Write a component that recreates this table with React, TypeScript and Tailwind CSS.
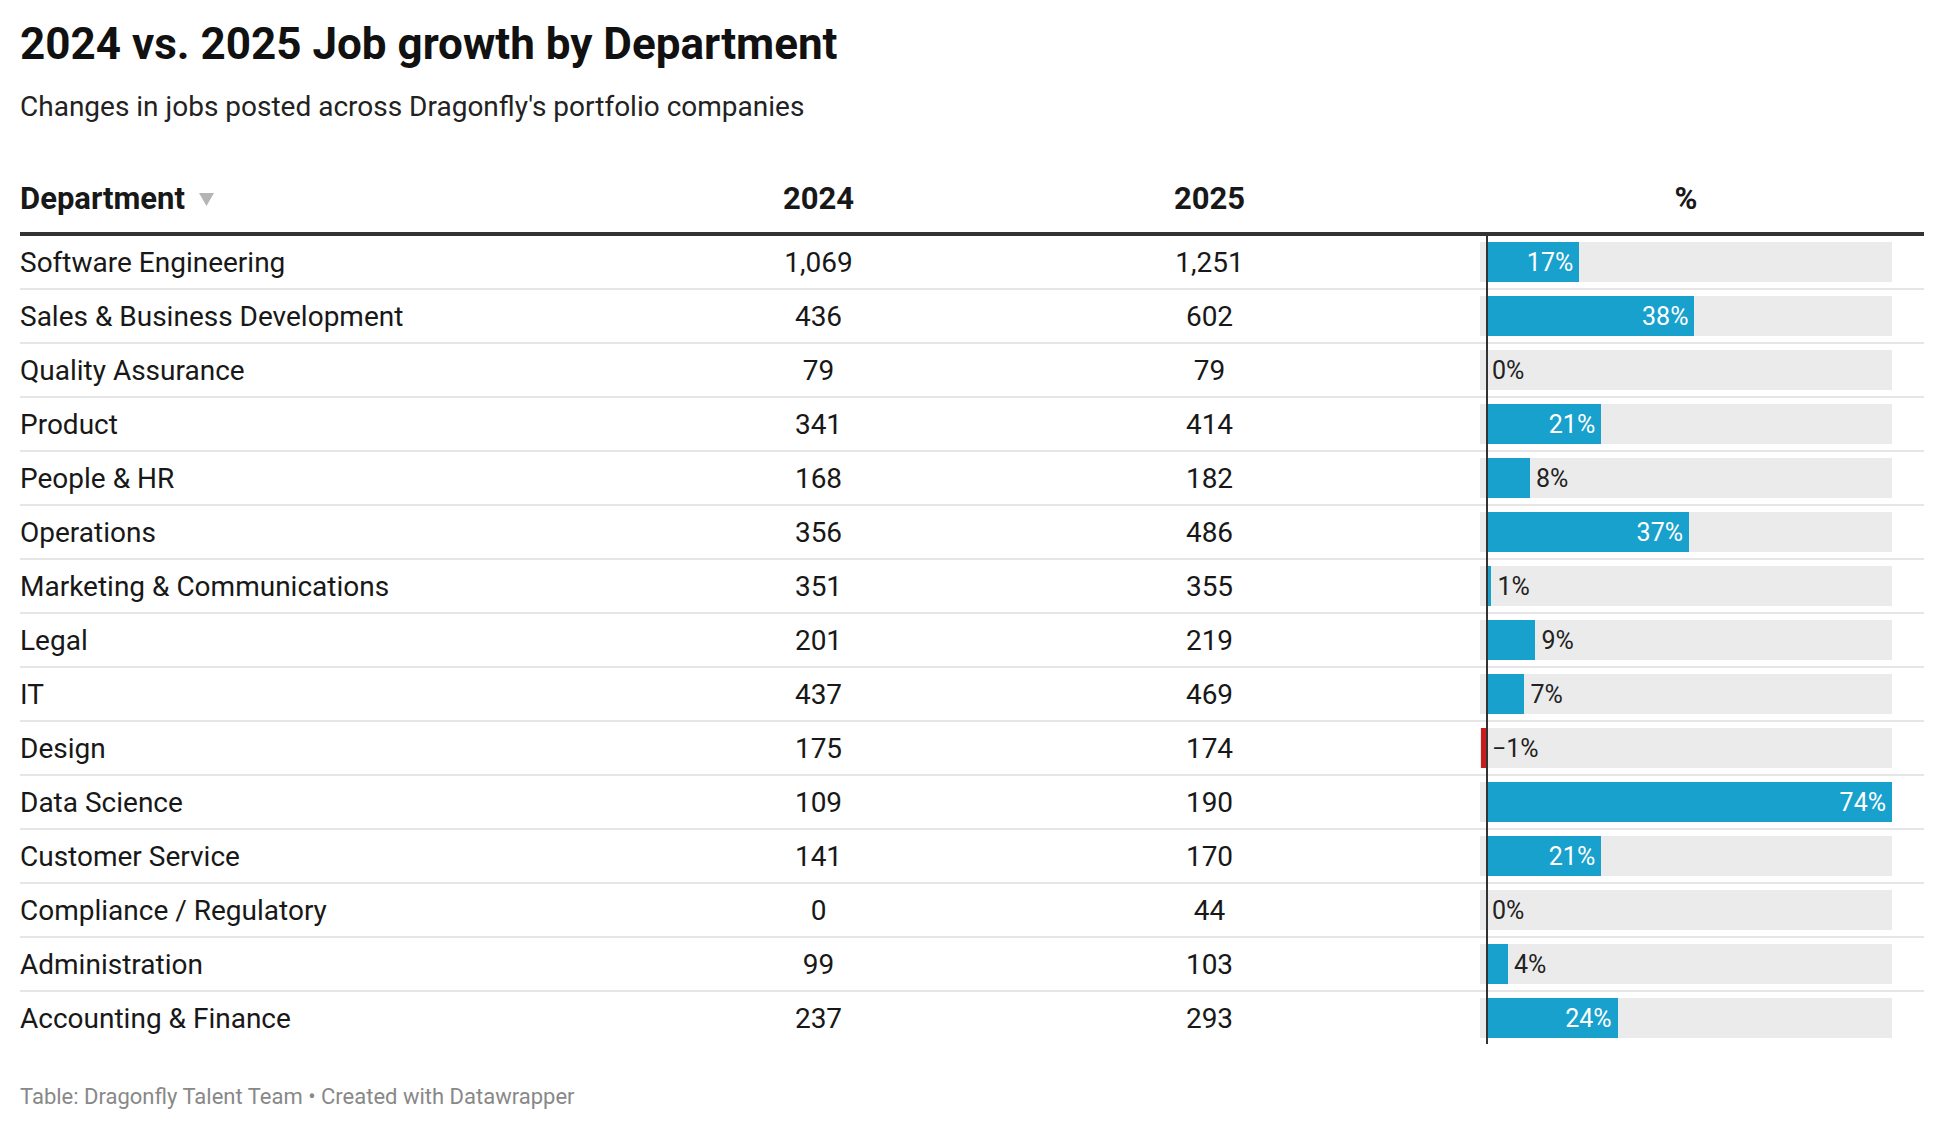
import React from "react";

type Row = { name: string; a: string; b: string; pct: number };

const rows: Row[] = [
  { name: "Software Engineering", a: "1,069", b: "1,251", pct: 17 },
  { name: "Sales & Business Development", a: "436", b: "602", pct: 38 },
  { name: "Quality Assurance", a: "79", b: "79", pct: 0 },
  { name: "Product", a: "341", b: "414", pct: 21 },
  { name: "People & HR", a: "168", b: "182", pct: 8 },
  { name: "Operations", a: "356", b: "486", pct: 37 },
  { name: "Marketing & Communications", a: "351", b: "355", pct: 1 },
  { name: "Legal", a: "201", b: "219", pct: 9 },
  { name: "IT", a: "437", b: "469", pct: 7 },
  { name: "Design", a: "175", b: "174", pct: -1 },
  { name: "Data Science", a: "109", b: "190", pct: 74 },
  { name: "Customer Service", a: "141", b: "170", pct: 21 },
  { name: "Compliance / Regulatory", a: "0", b: "44", pct: 0 },
  { name: "Administration", a: "99", b: "103", pct: 4 },
  { name: "Accounting & Finance", a: "237", b: "293", pct: 24 },
];

const Z = 6; // zero offset in track
const K = 406 / 74; // px per percent

function Bar({ pct }: { pct: number }) {
  const w = Math.abs(pct) * K;
  const left = pct >= 0 ? Z : Z - w;
  const label = pct < 0 ? `\u2212${Math.abs(pct)}%` : `${pct}%`;
  const inside = pct >= 15;
  return (
    <div className="relative h-[40px] w-[412px] bg-[#ebebeb]">
      {pct !== 0 && (
        <div
          className={pct > 0 ? "absolute top-0 h-[40px] bg-[#18a1cd]" : "absolute top-0 h-[40px] bg-[#c71e1d]"}
          style={{ left, width: w }}
        />
      )}
      {inside ? (
        <div
          className="absolute top-0 flex h-[40px] items-center justify-end pr-[6px] pt-[2px] text-[25px] leading-[38px] text-white"
          style={{ left: Z, width: w }}
        >
          {label}
        </div>
      ) : (
        <div
          className="absolute top-0 flex h-[40px] items-center pt-[2px] text-[25px] leading-[38px] text-[#222]"
          style={{ left: Math.max(Z, Z + (pct > 0 ? w : 0)) + 6 }}
        >
          {label}
        </div>
      )}
    </div>
  );
}

export default function App() {
  return (
    <div className="min-h-screen bg-white px-[20px] pt-[18px] font-['Roboto',sans-serif] text-[#181818]">
      <h1 className="text-[44px] font-bold leading-[53px] text-[#111]">2024 vs. 2025 Job growth by Department</h1>
      <p className="mt-[19px] text-[28px] leading-[34px] text-[#222]">
        Changes in jobs posted across Dragonfly's portfolio companies
      </p>

      <div className="mt-[57px] grid grid-cols-[603px_391px_391px_1fr] border-b-4 border-[#333] pb-[15px] text-[31px] font-bold leading-[36px]">
        <div className="flex items-center">
          <span>Department</span>
          <svg width="15" height="13" viewBox="0 0 15 13" className="ml-[14px]">
            <polygon points="0,0 15,0 7.5,13" fill="#b5b5b5" />
          </svg>
        </div>
        <div className="text-center">2024</div>
        <div className="text-center">2025</div>
        <div className="pl-[75px] pr-[32px]">
          <div className="w-[412px] text-center">%</div>
        </div>
      </div>

      <div className="relative">
        {rows.map((r, i) => (
          <div
            key={r.name}
            className={
              i < rows.length - 1
                ? "grid h-[54px] grid-cols-[603px_391px_391px_1fr] items-center border-b-2 border-[#e6e6e6] text-[28px] leading-[34px]"
                : "grid h-[52px] grid-cols-[603px_391px_391px_1fr] items-center text-[28px] leading-[34px]"
            }
          >
            <div className="pt-[1px]">{r.name}</div>
            <div className="pt-[1px] text-center">{r.a}</div>
            <div className="pt-[1px] text-center">{r.b}</div>
            <div className="pl-[75px] pr-[32px]">
              <Bar pct={r.pct} />
            </div>
          </div>
        ))}
        <div className="absolute bottom-0 left-[1466px] top-0 w-[2px] bg-[#333]" />
      </div>

      <div className="mt-[40px] text-[22px] leading-[26px] text-[#888]">
        Table: Dragonfly Talent Team • Created with Datawrapper
      </div>
    </div>
  );
}
